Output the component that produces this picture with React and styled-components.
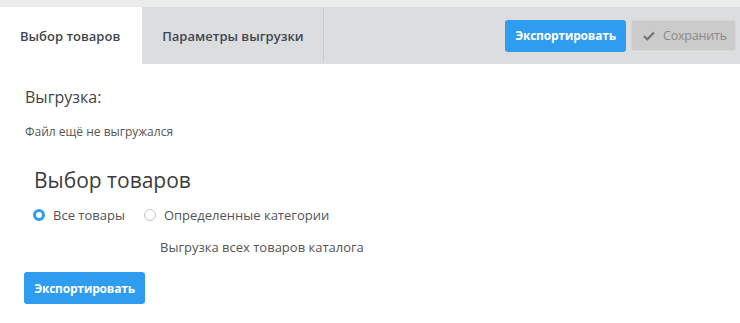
import React from 'react'
import styled, { createGlobalStyle } from 'styled-components'

const GlobalStyle = createGlobalStyle`
  body {
    margin: 0;
    background: #fff;
    font-family: "Open Sans", "Liberation Sans", sans-serif;
    color: #4a4a4a;
  }
`

const Wrapper = styled.div`
  width: 740px;
  height: 323px;
  border-top: 7px solid #ececec;
  box-sizing: border-box;
`

const TabBar = styled.div`
  display: flex;
  align-items: stretch;
  height: 57px;
  background-color: #dcdddf;
`

const Tab = styled.div`
  display: flex;
  align-items: center;
  padding: ${props => props.active ? '0 22px 0 20px' : '0 19px 0 20px'};
  font-size: 13px;
  font-weight: 600;
  color: #3f4751;
  background-color: ${props => props.active ? '#fff' : 'transparent'};
`

const Divider = styled.div`
  width: 1px;
  margin-bottom: 2px;
  background-color: #cbccce;
`

const Actions = styled.div`
  margin-left: auto;
  display: flex;
  align-items: center;
  gap: 5px;
  padding-right: 4px;
`

const PrimaryButton = styled.button`
  height: 32px;
  width: 121px;
  padding: 0;
  border: none;
  border-radius: 3px;
  background-color: #2e9cef;
  color: #fff;
  font-family: inherit;
  font-size: 12px;
  font-weight: 700;
  letter-spacing: -0.2px;
  cursor: pointer;
`

const SaveButton = styled.button`
  display: flex;
  align-items: center;
  gap: 8px;
  height: 31px;
  width: 105px;
  padding: 0 0 0 11px;
  border: 1px solid #d6d6d6;
  border-radius: 2px;
  background-color: #cbcbcb;
  color: #8a8a8a;
  font-family: inherit;
  font-size: 12.5px;
  letter-spacing: -0.2px;
`

const Content = styled.div`
  padding: 22px 24px 0 24px;
`

const SectionTitle = styled.div`
  font-size: 16px;
  color: #444;
  margin-left: 1px;
`

const Note = styled.div`
  margin: 15px 0 0 1px;
  font-size: 12px;
  color: #555;
`

const Heading = styled.div`
  margin: 26px 0 0 10px;
  font-size: 21px;
  color: #3c3c3c;
`

const RadioGroup = styled.div`
  display: flex;
  gap: 19px;
  margin: 12px 0 0 9px;
`

const RadioLabel = styled.label`
  display: flex;
  align-items: center;
  gap: 8px;
  font-size: 13px;
  color: #555;
`

const RadioDot = styled.span`
  box-sizing: border-box;
  width: 12px;
  height: 12px;
  border-radius: 50%;
  border: ${props => props.checked ? '3.5px solid #2e9cef' : '1px solid #c2c2c2'};
  background-color: #fff;
`

const Description = styled.div`
  margin: 14px 0 0 136px;
  font-size: 13px;
  color: #555;
`

const BottomButton = styled(PrimaryButton)`
  margin-top: 16px;
  width: 121px;
`

const CheckIcon = () => (
  <svg width="12" height="10" viewBox="0 0 12 10">
    <path d="M1 5.2 L4.3 8.3 L11 1.5" fill="none" stroke="#6f6f6f" strokeWidth="2" />
  </svg>
)

const App = () => (
  <Wrapper>
    <GlobalStyle />
    <TabBar>
      <Tab active>Выбор товаров</Tab>
      <Tab>Параметры выгрузки</Tab>
      <Divider />
      <Actions>
        <PrimaryButton>Экспортировать</PrimaryButton>
        <SaveButton>
          <CheckIcon />
          Сохранить
        </SaveButton>
      </Actions>
    </TabBar>

    <Content>
      <SectionTitle>Выгрузка:</SectionTitle>
      <Note>Файл ещё не выгружался</Note>
      <Heading>Выбор товаров</Heading>
      <RadioGroup>
        <RadioLabel>
          <RadioDot checked />
          Все товары
        </RadioLabel>
        <RadioLabel>
          <RadioDot />
          Определенные категории
        </RadioLabel>
      </RadioGroup>
      <Description>Выгрузка всех товаров каталога</Description>
      <BottomButton>Экспортировать</BottomButton>
    </Content>
  </Wrapper>
)

export default App
